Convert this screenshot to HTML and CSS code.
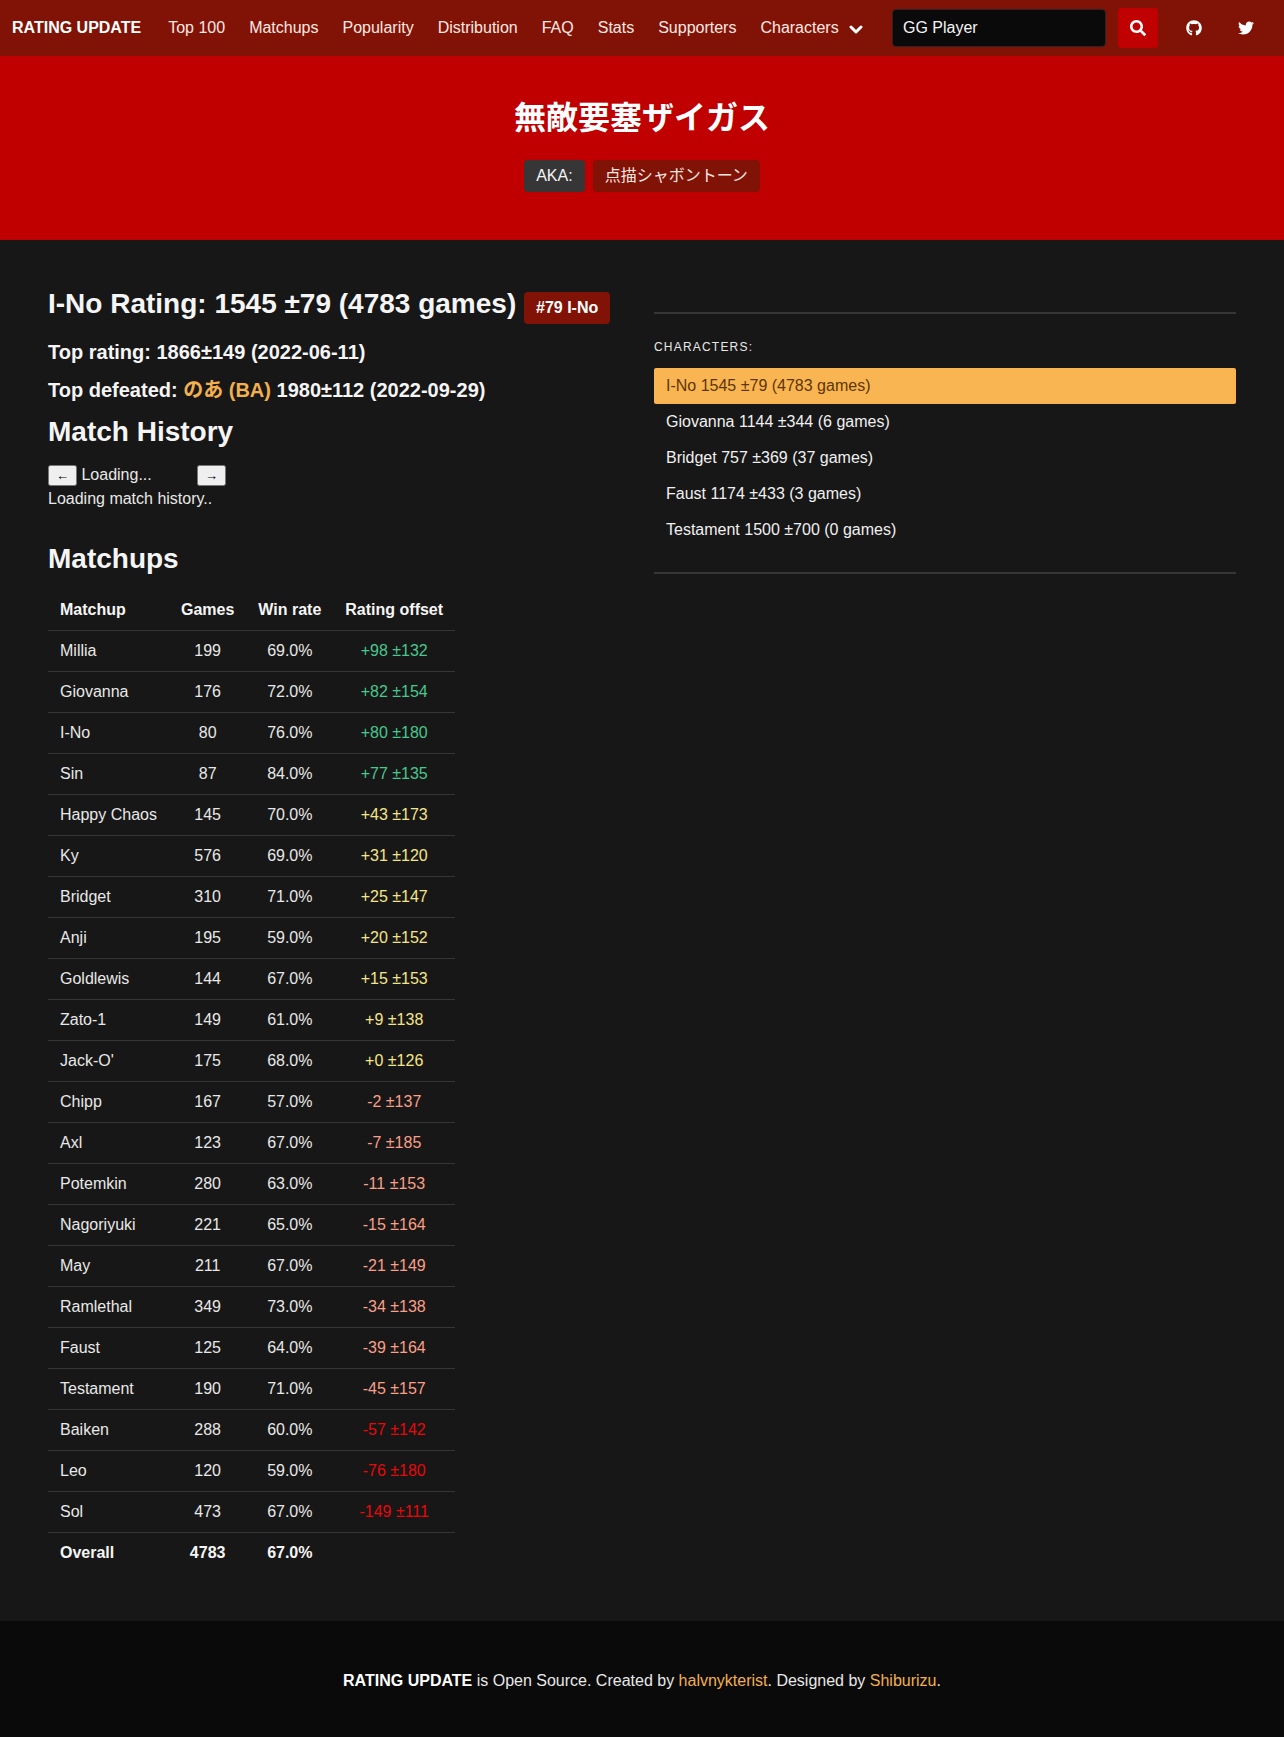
FILE: index.html
```html
<!DOCTYPE html>
<html lang="en">

	<head>
		<meta charset="UTF-8">
		<meta name="viewport" content="width=device-width, initial-scale=1">
		<title>無敵要塞ザイガス - Rating Update</title>
		<link rel="stylesheet" href="styles.css">
	</head>

	<body>
		<nav class="navbar">
			<a class="navbar-item brand" href="#">RATING UPDATE</a>
			<a class="navbar-item" href="#">Top 100</a>
			<a class="navbar-item" href="#">Matchups</a>
			<a class="navbar-item" href="#">Popularity</a>
			<a class="navbar-item" href="#">Distribution</a>
			<a class="navbar-item" href="#">FAQ</a>
			<a class="navbar-item" href="#">Stats</a>
			<a class="navbar-item" href="#">Supporters</a>
			<a class="navbar-item" href="#">Characters
				<svg class="arrow" viewBox="0 0 14 10"><path d="M2 2l5 5 5-5" fill="none" stroke="currentColor" stroke-width="3" stroke-linecap="round" stroke-linejoin="round"/></svg>
			</a>
			<form class="search">
				<input type="text" name="name" placeholder="GG Player" aria-label="GG Player">
				<button type="button" aria-label="Search">
					<svg class="icon" viewBox="0 0 512 512"><path d="M505 442.7L405.3 343c-4.5-4.5-10.6-7-17-7H372c27.6-35.3 44-79.7 44-128C416 93.1 322.9 0 208 0S0 93.1 0 208s93.1 208 208 208c48.3 0 92.7-16.4 128-44v16.3c0 6.4 2.5 12.5 7 17l99.7 99.7c9.4 9.4 24.6 9.4 33.9 0l28.3-28.3c9.4-9.4 9.4-24.6.1-34zM208 336c-70.7 0-128-57.2-128-128 0-70.7 57.2-128 128-128 70.7 0 128 57.2 128 128 0 70.7-57.2 128-128 128z"/></svg>
				</button>
			</form>
			<a class="social" href="#" aria-label="GitHub">
				<svg class="icon" viewBox="0 0 496 512"><path d="M165.9 397.4c0 2-2.3 3.6-5.2 3.6-3.3.3-5.6-1.3-5.6-3.6 0-2 2.3-3.6 5.2-3.6 3-.3 5.6 1.3 5.6 3.6zm-31.1-4.5c-.7 2 1.3 4.3 4.3 4.9 2.6 1 5.6 0 6.2-2s-1.3-4.3-4.3-5.2c-2.6-.7-5.5.3-6.2 2.3zm44.2-1.7c-2.9.7-4.9 2.6-4.6 4.9.3 2 2.9 3.3 5.9 2.6 2.9-.7 4.9-2.6 4.6-4.6-.3-1.9-3-3.2-5.9-2.9zM244.8 8C106.1 8 0 113.3 0 252c0 110.9 69.8 205.8 169.5 239.2 12.8 2.3 17.3-5.6 17.3-12.1 0-6.2-.3-40.4-.3-61.4 0 0-70 15-84.7-29.8 0 0-11.4-29.1-27.8-36.6 0 0-22.9-15.7 1.6-15.4 0 0 24.9 2 38.6 25.8 21.9 38.6 58.6 27.5 72.9 20.9 2.3-16 8.8-27.1 16-33.7-55.9-6.2-112.3-14.3-112.3-110.5 0-27.5 7.6-41.3 23.6-58.9-2.6-6.5-11.1-33.3 2.6-67.9 20.9-6.5 69 27 69 27 20-5.6 41.5-8.5 62.8-8.5s42.8 2.9 62.8 8.5c0 0 48.1-33.6 69-27 13.7 34.7 5.2 61.4 2.6 67.9 16 17.7 25.8 31.5 25.8 58.9 0 96.5-58.9 104.2-114.8 110.5 9.2 7.9 17 22.9 17 46.4 0 33.7-.3 75.4-.3 83.6 0 6.5 4.6 14.4 17.3 12.1C428.2 457.8 496 362.9 496 252 496 113.3 383.5 8 244.8 8z"/></svg>
			</a>
			<a class="social" href="#" aria-label="Twitter">
				<svg class="icon" viewBox="0 0 512 512"><path d="M459.37 151.716c.325 4.548.325 9.097.325 13.645 0 138.72-105.583 298.558-298.558 298.558-59.452 0-114.68-17.219-161.137-47.106 8.447.974 16.568 1.299 25.34 1.299 49.055 0 94.213-16.568 130.274-44.832-46.132-.975-84.792-31.188-98.112-72.772 6.498.974 12.995 1.624 19.818 1.624 9.421 0 18.843-1.3 27.614-3.573-48.081-9.747-84.143-51.98-84.143-102.985v-1.299c13.969 7.797 30.214 12.67 47.431 13.319-28.264-18.843-46.781-51.005-46.781-87.391 0-19.492 5.197-37.36 14.294-52.954 51.655 63.675 129.3 105.258 216.365 109.807-1.624-7.797-2.599-15.918-2.599-24.04 0-57.828 46.782-104.934 104.934-104.934 30.213 0 57.502 12.67 76.67 33.137 23.715-4.548 46.456-13.32 66.599-25.34-7.798 24.366-24.366 44.833-46.132 57.827 21.117-2.273 41.584-8.122 60.426-16.243-14.292 20.791-32.161 39.308-52.628 54.253z"/></svg>
			</a>
		</nav>

		<header class="hero">
			<h1>無敵要塞ザイガス</h1>
			<div class="tags">
				<span class="tag dark">AKA:</span>
				<span class="tag">点描シャボントーン</span>
			</div>
		</header>

		<main class="columns">
			<section class="column">
				<h2>I-No Rating: 1545 ±79 (4783 games) <span class="tag">#79 I-No</span></h2>
				<h3>Top rating: 1866±149 (2022-06-11)</h3>
				<h3>Top defeated: <a href="#">のあ (BA)</a> 1980±112 (2022-09-29)</h3>

				<h2>Match History</h2>
				<div class="history">
					<div>
						<button type="button">←</button>
						<span class="page">Loading...</span>
						<button type="button">→</button>
					</div>
					<div>Loading match history..</div>
				</div>

				<h2>Matchups</h2>
				<table class="matchups">
					<thead>
						<tr><th>Matchup</th><th>Games</th><th>Win rate</th><th>Rating offset</th></tr>
					</thead>
					<tbody>
						<tr><td>Millia</td><td>199</td><td>69.0%</td><td class="good">+98 ±132</td></tr>
						<tr><td>Giovanna</td><td>176</td><td>72.0%</td><td class="good">+82 ±154</td></tr>
						<tr><td>I-No</td><td>80</td><td>76.0%</td><td class="good">+80 ±180</td></tr>
						<tr><td>Sin</td><td>87</td><td>84.0%</td><td class="good">+77 ±135</td></tr>
						<tr><td>Happy Chaos</td><td>145</td><td>70.0%</td><td class="even">+43 ±173</td></tr>
						<tr><td>Ky</td><td>576</td><td>69.0%</td><td class="even">+31 ±120</td></tr>
						<tr><td>Bridget</td><td>310</td><td>71.0%</td><td class="even">+25 ±147</td></tr>
						<tr><td>Anji</td><td>195</td><td>59.0%</td><td class="even">+20 ±152</td></tr>
						<tr><td>Goldlewis</td><td>144</td><td>67.0%</td><td class="even">+15 ±153</td></tr>
						<tr><td>Zato-1</td><td>149</td><td>61.0%</td><td class="even">+9 ±138</td></tr>
						<tr><td>Jack-O'</td><td>175</td><td>68.0%</td><td class="even">+0 ±126</td></tr>
						<tr><td>Chipp</td><td>167</td><td>57.0%</td><td class="bad">-2 ±137</td></tr>
						<tr><td>Axl</td><td>123</td><td>67.0%</td><td class="bad">-7 ±185</td></tr>
						<tr><td>Potemkin</td><td>280</td><td>63.0%</td><td class="bad">-11 ±153</td></tr>
						<tr><td>Nagoriyuki</td><td>221</td><td>65.0%</td><td class="bad">-15 ±164</td></tr>
						<tr><td>May</td><td>211</td><td>67.0%</td><td class="bad">-21 ±149</td></tr>
						<tr><td>Ramlethal</td><td>349</td><td>73.0%</td><td class="bad">-34 ±138</td></tr>
						<tr><td>Faust</td><td>125</td><td>64.0%</td><td class="bad">-39 ±164</td></tr>
						<tr><td>Testament</td><td>190</td><td>71.0%</td><td class="bad">-45 ±157</td></tr>
						<tr><td>Baiken</td><td>288</td><td>60.0%</td><td class="worst">-57 ±142</td></tr>
						<tr><td>Leo</td><td>120</td><td>59.0%</td><td class="worst">-76 ±180</td></tr>
						<tr><td>Sol</td><td>473</td><td>67.0%</td><td class="worst">-149 ±111</td></tr>
						<tr><th>Overall</th><th>4783</th><th>67.0%</th><th></th></tr>
					</tbody>
				</table>
			</section>

			<aside class="column menu">
				<hr>
				<p class="menu-label">Characters:</p>
				<ul>
					<li><a class="active" href="#">I-No 1545 ±79 (4783 games)</a></li>
					<li><a href="#">Giovanna 1144 ±344 (6 games)</a></li>
					<li><a href="#">Bridget 757 ±369 (37 games)</a></li>
					<li><a href="#">Faust 1174 ±433 (3 games)</a></li>
					<li><a href="#">Testament 1500 ±700 (0 games)</a></li>
				</ul>
				<hr>
			</aside>
		</main>

		<footer class="footer">
			<strong>RATING UPDATE</strong> is Open Source. Created by <a href="#">halvnykterist</a>. Designed by <a href="#">Shiburizu</a>.
		</footer>
	</body>

</html>
```
FILE: styles.css
```css
* {
	margin: 0;
	padding: 0;
	box-sizing: border-box;
}

body {
	background: #171717;
	color: #e8e8e8;
	font-family: "Liberation Sans", Arial, "Noto Sans CJK JP", sans-serif;
	font-size: 16px;
	line-height: 24px;
}

a {
	color: #f2b04f;
	text-decoration: none;
}

ul {
	list-style: none;
}

.navbar {
	display: flex;
	align-items: center;
	min-height: 56px;
	padding-right: 12px;
	background: #801305;
}

.navbar-item {
	display: flex;
	align-items: center;
	padding: 0 12px;
	color: #ffe8e4;
	white-space: nowrap;
}

.brand {
	padding-right: 15px;
	color: white;
	font-weight: bold;
}

.arrow {
	width: 14px;
	height: 10px;
	margin-left: 10px;
	margin-top: 4px;
	color: white;
}

.icon {
	display: block;
	width: 16px;
	height: 16px;
	fill: white;
}

.search {
	display: flex;
	align-items: center;
	gap: 12px;
	margin-left: auto;
	margin-right: 10px;
}

.search input {
	width: 214px;
	height: 38px;
	padding: 0 10px;
	background: #0a0a0a;
	border: 1px solid #2c2422;
	border-radius: 4px;
	color: #f5f5f5;
	font: inherit;
}

.search input::placeholder {
	color: #f5f5f5;
}

.search button {
	width: 40px;
	height: 40px;
	padding: 12px;
	background: #c00000;
	border: none;
	border-radius: 4px;
}

.social {
	display: flex;
	justify-content: center;
	width: 52px;
}

.hero {
	padding: 42px 24px 48px;
	background: #c00000;
	text-align: center;
}

.hero h1 {
	margin-bottom: 22px;
	color: white;
	font-size: 32px;
	line-height: 40px;
}

.tags {
	display: flex;
	justify-content: center;
	gap: 8px;
}

.tag {
	display: inline-block;
	height: 32px;
	padding: 0 12px;
	background: #801305;
	border-radius: 4px;
	color: #ffe8e4;
	font-size: 16px;
	line-height: 32px;
	white-space: nowrap;
}

.tag.dark {
	background: #363636;
	color: #f5f5f5;
}

.columns {
	display: grid;
	grid-template-columns: 1fr 1fr;
	gap: 24px;
	padding: 48px;
}

h2 {
	margin-bottom: 16px;
	color: #f5f5f5;
	font-size: 28px;
	line-height: 31px;
}

h2 .tag {
	color: white;
}

h3 {
	margin-bottom: 14px;
	color: #f5f5f5;
	font-size: 20px;
	line-height: 24px;
}

.history {
	margin-bottom: 32px;
}

.history button {
	padding: 1px 6px;
	font-size: 13px;
}

.page {
	display: inline-block;
	width: 111px;
}

.matchups {
	border-collapse: separate;
	border-spacing: 0;
}

.matchups th,
.matchups td {
	height: 41px;
	padding: 8px 12px;
	border-bottom: 1px solid #363636;
	text-align: center;
}

.matchups th {
	color: #f5f5f5;
}

.matchups th:first-child,
.matchups td:first-child {
	text-align: left;
}

.matchups tbody tr:last-child th {
	height: 40px;
	border-bottom: none;
}

.matchups .good {
	color: #48c78e;
}

.matchups .even {
	color: #f5e488;
}

.matchups .bad {
	color: #fa9f88;
}

.matchups .worst {
	color: #e80808;
}

hr {
	height: 2px;
	margin: 24px 0;
	background: #363636;
	border: none;
}

.menu-label {
	margin-bottom: 12px;
	font-size: 12px;
	letter-spacing: 0.1em;
	line-height: 18px;
	text-transform: uppercase;
}

.menu li a {
	display: block;
	padding: 6px 12px;
	border-radius: 2px;
	color: #f0f0f0;
}

.menu li .active {
	background: #f9b552;
	color: #5c3505;
}

.footer {
	padding: 48px 24px 44px;
	background: #0a0a0a;
	text-align: center;
}

.footer strong {
	color: white;
}
```
